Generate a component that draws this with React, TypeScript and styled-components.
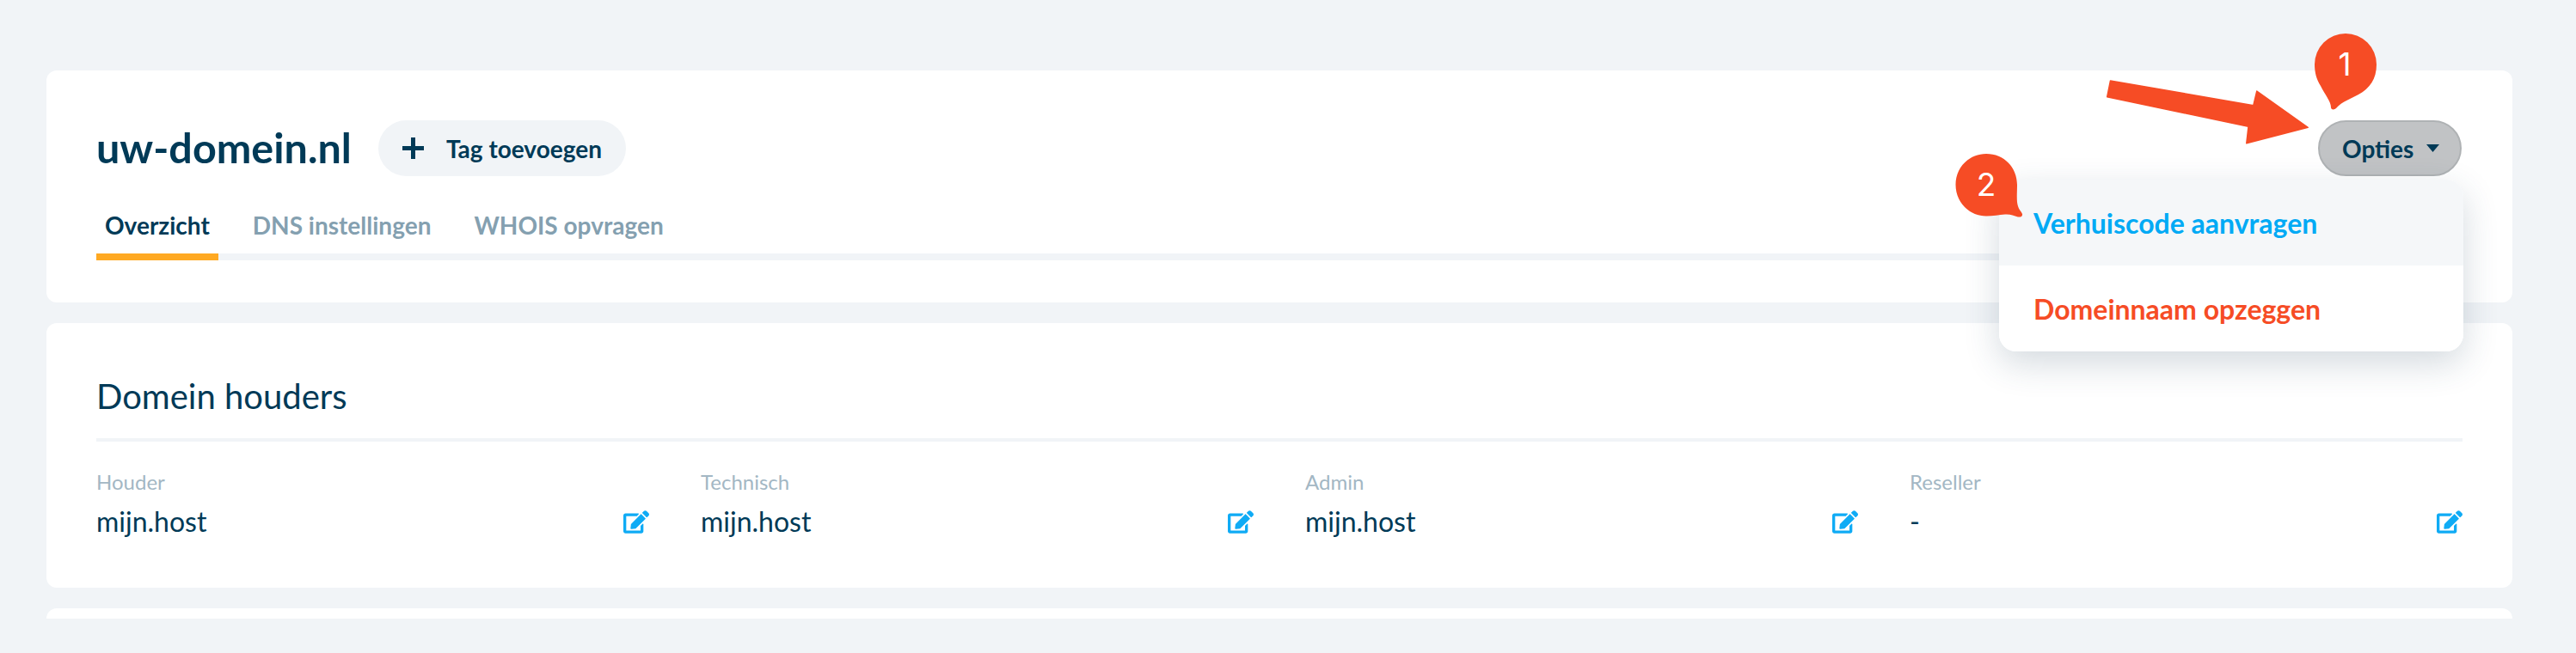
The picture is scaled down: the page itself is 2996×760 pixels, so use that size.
import styled, { createGlobalStyle } from 'styled-components';
import { FaEdit } from 'react-icons/fa';

const GlobalStyle = createGlobalStyle`
  html, body {
    margin: 0;
    padding: 0;
    background: #f1f4f7;
    font-family: Lato, "Open Sans", sans-serif;
    color: #003a57;
  }
  * { box-sizing: border-box; }
`;

const Page = styled.div`
  position: relative;
  width: 2996px;
  height: 760px;
  padding: 82px 74px 40px 54px;
  overflow: hidden;
`;

const Stack = styled.div`
  display: flex;
  flex-direction: column;
  gap: 24px;
  height: 638px;
  overflow: hidden;
`;

const Card = styled.section`
  flex: none;
  background: #fff;
  border-radius: 12px;
`;

const HeaderCard = styled(Card)`
  position: relative;
  z-index: 2;
  padding: 58px 58px 49px;
`;

const HoldersCard = styled(Card)`
  padding: 60px 58px 55px;
`;

const EmptyCard = styled(Card)`
  height: 40px;
`;

const TopRow = styled.div`
  display: flex;
  align-items: center;
  height: 65px;
`;

const Title = styled.h1`
  margin: 0 31px 2px 0;
  font-size: 48.5px;
  line-height: 63px;
  font-weight: 700;
  color: #003a57;
`;

const TagButton = styled.button`
  display: flex;
  align-items: center;
  gap: 26px;
  height: 65px;
  padding: 0 28px;
  border: 0;
  border-radius: 33px;
  background: #f1f4f7;
  color: #003a57;
  font: 700 28px/36px Lato, sans-serif;
`;

const OptionsWrap = styled.div`
  position: relative;
  margin-left: auto;
  margin-right: 1px;
`;

const OptionsButton = styled.button`
  display: flex;
  align-items: center;
  gap: 15px;
  height: 65px;
  width: 167px;
  padding: 0 0 0 26px;
  border: 2px solid #afb2b4;
  border-radius: 33px;
  background: #c1c3c5;
  color: #003a57;
  font: 700 28px/36px Lato, sans-serif;
`;

const Dropdown = styled.div`
  position: absolute;
  top: 69px;
  right: -2px;
  width: 540px;
  height: 200px;
  border-radius: 20px;
  background: #fff;
  overflow: hidden;
  box-shadow: 0 14px 40px rgba(40, 70, 95, 0.2);
`;

const DropdownItem = styled.div<{ $tone: 'blue' | 'red'; $hover?: boolean }>`
  display: flex;
  align-items: center;
  height: 100px;
  padding: 0 40px;
  background: ${p => (p.$hover ? '#f5f7f9' : '#fff')};
  color: ${p => (p.$tone === 'blue' ? '#00aaf5' : '#f64c25')};
  font-size: 32px;
  font-weight: 700;
`;

const Tabs = styled.nav`
  display: flex;
  gap: 30px;
  margin-top: 39px;
  border-bottom: 8px solid #f1f4f7;
`;

const Tab = styled.div<{ $active?: boolean }>`
  margin-bottom: -8px;
  padding: 0 10px 15px;
  border-bottom: 8px solid ${p => (p.$active ? '#ffa922' : 'transparent')};
  color: ${p => (p.$active ? '#003a57' : '#84a0b0')};
  font-size: 28px;
  line-height: 36px;
  font-weight: 700;
`;

const Heading = styled.h2`
  margin: 0;
  padding: 1px 0 25px;
  border-bottom: 4px solid #f1f4f7;
  font-size: 40px;
  line-height: 48px;
  font-weight: 400;
  color: #003a57;
`;

const Holders = styled.div`
  display: grid;
  grid-template-columns: repeat(4, 1fr);
  gap: 60px;
  margin-top: 32px;
`;

const Holder = styled.div`
  display: grid;
  grid-template-columns: 1fr auto;
  align-items: center;
  row-gap: 9px;
`;

const HolderLabel = styled.div`
  grid-column: 1 / 3;
  font-size: 24px;
  line-height: 30px;
  color: #a3b7c4;
`;

const HolderValue = styled.div`
  font-size: 32px;
  line-height: 44px;
  color: #003a57;
`;

const EditIcon = styled(FaEdit)`
  display: block;
  width: 30px;
  height: 27px;
  color: #0fabf5;
`;

const Arrow = styled.svg`
  position: absolute;
  left: 2440px;
  top: 84px;
  width: 256px;
  height: 96px;
  z-index: 3;
`;

const Marker = styled.div<{ $x: number; $y: number; $w: number; $h: number }>`
  position: absolute;
  left: ${p => p.$x}px;
  top: ${p => p.$y}px;
  width: ${p => p.$w}px;
  height: ${p => p.$h}px;
  z-index: 3;
`;

const MarkerShape = styled.svg`
  display: block;
  width: 100%;
  height: 100%;
`;

const MarkerDigit = styled.span<{ $x: number; $y: number }>`
  position: absolute;
  left: ${p => p.$x}px;
  top: ${p => p.$y}px;
  width: 40px;
  text-align: center;
  color: #fff;
  font: 400 37px/44px Inter, Roboto, sans-serif;
`;

const holders = [
  { label: 'Houder', value: 'mijn.host' },
  { label: 'Technisch', value: 'mijn.host' },
  { label: 'Admin', value: 'mijn.host' },
  { label: 'Reseller', value: '-' },
];

export default function App() {
  return (
    <Page>
      <GlobalStyle />
      <Stack>
        <HeaderCard>
          <TopRow>
            <Title>uw-domein.nl</Title>
            <TagButton>
              <svg width="25" height="25" viewBox="0 0 25 25">
                <path d="M12.5 0v25M0 12.5h25" stroke="#003a57" strokeWidth="5" />
              </svg>
              Tag toevoegen
            </TagButton>
            <OptionsWrap>
              <OptionsButton>
                Opties
                <svg width="15" height="9" viewBox="0 0 15 9">
                  <path d="M0 0h15L7.5 9z" fill="#003a57" />
                </svg>
              </OptionsButton>
              <Dropdown>
                <DropdownItem $tone="blue" $hover>Verhuiscode aanvragen</DropdownItem>
                <DropdownItem $tone="red">Domeinnaam opzeggen</DropdownItem>
              </Dropdown>
            </OptionsWrap>
          </TopRow>
          <Tabs>
            <Tab $active>Overzicht</Tab>
            <Tab>DNS instellingen</Tab>
            <Tab>WHOIS opvragen</Tab>
          </Tabs>
        </HeaderCard>
        <HoldersCard>
          <Heading>Domein houders</Heading>
          <Holders>
            {holders.map(h => (
              <Holder key={h.label}>
                <HolderLabel>{h.label}</HolderLabel>
                <HolderValue>{h.value}</HolderValue>
                <EditIcon />
              </Holder>
            ))}
          </Holders>
        </HoldersCard>
        <EmptyCard />
      </Stack>

      <Arrow viewBox="2440 84 256 96">
        <path
          d="M2454.5 94 L2620.8 122.7 L2624.8 106 L2684.2 148.3 L2612.8 166.7 L2615 147.3 L2450.7 112.7 Z"
          fill="#f64c25"
          stroke="#f64c25"
          strokeWidth="1.5"
          strokeLinejoin="round"
        />
      </Arrow>
      <Marker $x={2660} $y={30} $w={110} $h={105}>
        <MarkerShape viewBox="0 0 110 105">
          <path
            d="M32 45 A36 36 0 0 1 104 45 C104 62 96 73 83 80 C74 85 64 88 57 96 C55 98 51 98 51 95 C51 88 44 80 39 70 C34 62 32 54 32 45 Z"
            fill="#f64c25"
          />
        </MarkerShape>
        <MarkerDigit $x={47} $y={23}>1</MarkerDigit>
      </Marker>
      <Marker $x={2260} $y={170} $w={100} $h={90}>
        <MarkerShape viewBox="0 0 100 90">
          <path
            d="M14.5 45 C14.5 25 30 9 50 9 C71 9 86 25 86 45 C86 55 85 64 87 70 C88 74 91 76 92 79 C92.5 82 90 83 87 82.5 C82 81 78 79 72 79.5 C65 80 58 81.5 50 81.5 C30 81.5 14.5 65 14.5 45 Z"
            fill="#f64c25"
          />
        </MarkerShape>
        <MarkerDigit $x={30} $y={23}>2</MarkerDigit>
      </Marker>
    </Page>
  );
}
